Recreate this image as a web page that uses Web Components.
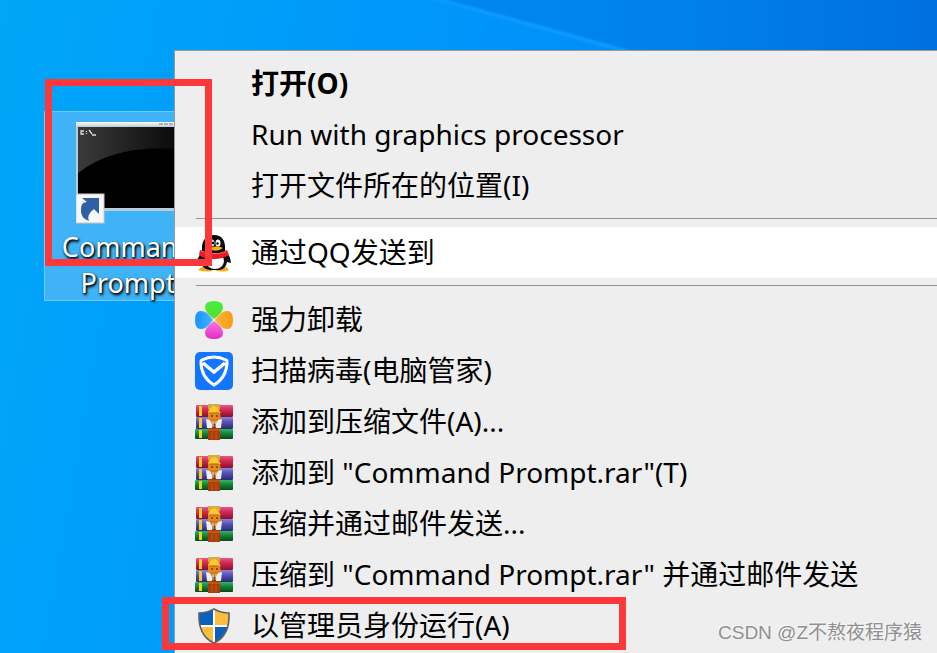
<!DOCTYPE html>
<html lang="zh-CN">
<head>
<meta charset="utf-8">
<title>Desktop context menu</title>
<style>
html,body{height:100%;margin:0;overflow:hidden}
body{font-family:"Noto Sans","Noto Sans CJK SC",sans-serif}
</style>
</head>
<body>
<win-desktop>
  <desktop-shortcut slot="icons">Command<br>Prompt</desktop-shortcut>
  <context-menu slot="menu">
    <menu-entry strong>打开(O)</menu-entry>
    <menu-entry>Run with graphics processor</menu-entry>
    <menu-entry>打开文件所在的位置(I)</menu-entry>
    <menu-line></menu-line>
    <menu-entry icon="qq" active>通过QQ发送到</menu-entry>
    <menu-line></menu-line>
    <menu-entry icon="clover">强力卸载</menu-entry>
    <menu-entry icon="guard">扫描病毒(电脑管家)</menu-entry>
    <menu-entry icon="rar">添加到压缩文件(A)...</menu-entry>
    <menu-entry icon="rar">添加到 "Command Prompt.rar"(T)</menu-entry>
    <menu-entry icon="rar">压缩并通过邮件发送...</menu-entry>
    <menu-entry icon="rar">压缩到 "Command Prompt.rar" 并通过邮件发送</menu-entry>
    <menu-entry icon="uac">以管理员身份运行(A)</menu-entry>
  </context-menu>
  <mark-box slot="marks" style="--x:45px;--y:79px;--w:167px;--h:187px"></mark-box>
  <mark-box slot="marks" style="--x:162px;--y:597px;--w:464px;--h:53px"></mark-box>
  <water-mark slot="marks">CSDN @Z不熬夜程序猿</water-mark>
</win-desktop>
<script>
const ICONS = {
  qq: `<svg viewBox="0 0 38 38">
    <path d="M3 36q5-5 13-4l3 4q-7 3-16 0zM19 36l4-4q8-1 11 4-7 3-15 0z" fill="#f9a91c"/>
    <path d="M8 17Q2 23 2 29l4-1q1 7 9 8h9q7-1 8-8l4 1q0-7-6-12z" fill="#0b0d10"/>
    <path d="M19 1C11 1 7 7 7 13v6h23v-6C30 7 27 1 19 1z" fill="#07090b"/>
    <ellipse cx="20" cy="27" rx="9" ry="8" fill="#fff"/>
    <path d="M5 16q14 7 27 0l2 5q-6 4-15 4h-4v5h-5v-6q-4-1-6-3z" fill="#e51c23"/>
    <path d="M6 17q12 5 25 1" stroke="#ff5a5a" fill="none"/>
    <ellipse cx="17" cy="9" rx="2.5" ry="3.5" fill="#ddd"/><ellipse cx="23" cy="9" rx="2.5" ry="3.5" fill="#fff"/>
    <circle cx="18" cy="9" r="1.3" fill="#000"/><circle cx="22.5" cy="9.5" r="1.2" fill="#000"/>
    <path d="M14 15q7-5 14-1-6 5-14 1z" fill="#f8ab13"/></svg>`,
  clover: `<svg viewBox="0 0 38 38"><defs>
    <linearGradient id="g" x2="0" y2="1"><stop stop-color="#45ef42"/><stop offset="1" stop-color="#5bdd28"/></linearGradient>
    <linearGradient id="b"><stop stop-color="#1593ff"/><stop offset="1" stop-color="#46b5ff"/></linearGradient>
    <linearGradient id="o"><stop stop-color="#ffb337"/><stop offset="1" stop-color="#f49a17"/></linearGradient>
    <linearGradient id="p" x2="0" y2="1"><stop stop-color="#f47ae0"/><stop offset="1" stop-color="#e62bc8"/></linearGradient></defs>
    <path d="M19 18C15 15 10 11 10 6q0-6 9-6t9 6c0 5-5 9-9 12z" fill="url(#g)"/>
    <path d="M18 19C15 15 11 10 6 10q-6 0-6 9t6 9c5 0 9-5 12-9z" fill="url(#b)"/>
    <path d="M20 19c3-4 7-9 12-9q6 0 6 9t-6 9c-5 0-9-5-12-9z" fill="url(#o)"/>
    <path d="M19 20c4 3 9 7 9 12q0 6-9 6t-9-6c0-5 5-9 9-12z" fill="url(#p)"/></svg>`,
  guard: `<svg viewBox="0 0 38 38"><rect width="38" height="38" rx="5" fill="#1476ff"/>
    <path d="M19 5q6 0 12 3 1 0 1 2 0 15-13 23Q6 25 6 10q0-2 1-2 6-3 12-3z" fill="none" stroke="#fff" stroke-width="3" stroke-linejoin="round"/>
    <path d="M8 11l11 9 11-9" fill="none" stroke="#fff" stroke-width="3.5"/></svg>`,
  rar: `<svg viewBox="0 0 38 38"><defs>
    <linearGradient id="r" x2="0" y2="1"><stop stop-color="#e8578a"/><stop offset=".35" stop-color="#d42f5b"/><stop offset="1" stop-color="#8c0d2b"/></linearGradient>
    <linearGradient id="v" x2="0" y2="1"><stop stop-color="#8885d8"/><stop offset=".4" stop-color="#5754b4"/><stop offset="1" stop-color="#2a2878"/></linearGradient>
    <linearGradient id="n" x2="0" y2="1"><stop stop-color="#35b464"/><stop offset=".4" stop-color="#16883c"/><stop offset="1" stop-color="#07481b"/></linearGradient></defs>
    <rect x="1" y="2" width="37" height="12" rx="1" fill="url(#r)"/>
    <rect x="1" y="14" width="37" height="12" rx="1" fill="url(#v)"/>
    <rect y="26" width="38" height="10" rx="1" fill="url(#n)"/>
    <path d="M4 3h3v10H4zM4 15h3v10H4zM4 27h3v8H4z" fill="#f2d21d"/>
    <rect x="13" y="1" width="12" height="5" fill="#cfae48"/>
    <path d="M13 10q0-7 6-7t6 7l1 7H13z" fill="#e08a1c"/>
    <path d="M14 8q1-5 5-5t5 5l2 2H13z" fill="#fcc832"/>
    <path d="M14 10h10" stroke="#b5630c"/>
    <path d="M16 13h2M21 13h2" stroke="#713500" stroke-width="1.5"/>
    <path d="M14 16h10v4l-5 3-5-3z" fill="#d07a1b"/>
    <path d="M11 16l4 1 2 4v4h-5zM27 16l-4 1-2 4v4h5z" fill="#eeeef2"/>
    <path d="M17 21h4v4h-4z" fill="#713d1b"/><path d="M18 18v6M21 18v6" stroke="#f2dfca"/>
    <rect x="13" y="25" width="12" height="12" fill="#a93e0b"/><path d="M13 27h12" stroke="#da701f"/><path d="M17 29v7M21 29v7" stroke="#c55816"/></svg>`,
  uac: `<svg viewBox="0 0 38 38"><defs><clipPath id="s"><path d="M19 2q7 4 15 4 1 23-15 30Q3 29 4 6q8 0 15-4z"/></clipPath></defs>
    <g clip-path="url(#s)"><path d="M0 0h19v19H0zM19 19h19v19H19z" fill="#0c60bd"/><path d="M19 0h19v19H19zM0 19h19v19H0z" fill="#ffbd3c"/>
    <path d="M19 0v38M0 19h38" stroke="#fff" stroke-width="2"/></g>
    <path d="M19 2q7 4 15 4 1 23-15 30Q3 29 4 6q8 0 15-4z" fill="none" stroke="#5c6268" stroke-width="1.6"/></svg>`
};

const define = (name, html, setup) => {
  const template = document.createElement('template');
  template.innerHTML = html;
  customElements.define(name, class extends HTMLElement {
    constructor() {
      super();
      this.attachShadow({mode: 'open'}).append(template.content.cloneNode(true));
    }
    connectedCallback() { if (setup) setup(this, this.shadowRoot); }
  });
};

define('win-desktop', `<style>
  :host{display:block;position:relative;height:100%;overflow:hidden;
    background:linear-gradient(100deg,#00a6f8 0%,#009ff9 20%,#0095fa 45%,#008ef8 60%,#0084ec 75%,#0070e0 100%)}
  .beam{position:absolute;left:0;top:0;width:937px;height:60px}
</style>
<svg class="beam" viewBox="0 0 937 60" aria-hidden="true">
  <defs><linearGradient id="k"><stop stop-color="#0087f0"/><stop offset=".5" stop-color="#0080ea"/><stop offset="1" stop-color="#006fe0"/></linearGradient>
  <filter id="f"><feGaussianBlur stdDeviation="1"/></filter></defs>
  <path d="M441 0L622 50V60H937V0z" fill="url(#k)"/>
  <path d="M425-4Q530 24 640 55" stroke="#0a9aff" stroke-width="4" fill="none" filter="url(#f)"/>
</svg>
<slot name="icons"></slot><slot name="menu"></slot><slot name="marks"></slot>`);

define('desktop-shortcut', `<style>
  :host{position:absolute;left:44px;top:111px}
  button{display:flex;flex-direction:column;align-items:center;width:168px;height:190px;padding:9px 0 0;
    box-sizing:border-box;background:#40b2f6;border:1px solid #72c8fa;color:#fff;font:inherit;font-size:27px;line-height:36px;
    text-shadow:1px 2px 3px #000,1px 1px 2px #023}
  svg{display:block;width:104px;height:108px;flex:none}
  span{display:block}
</style>
<button type="button">
<svg viewBox="0 0 104 108" aria-hidden="true"><defs>
  <linearGradient id="c"><stop stop-color="#3b3b3b"/><stop offset="1" stop-color="#080808"/></linearGradient>
  <linearGradient id="t" x2="0" y2="1"><stop stop-color="#fff"/><stop offset="1" stop-color="#bfc9d4"/></linearGradient></defs>
  <rect y="1" width="111" height="89" fill="#bacbd9"/><rect y="1" width="111" height="5" fill="url(#t)"/>
  <path d="M83 3h18" stroke="#a9b1ba" stroke-width="2" stroke-dasharray="4 1"/>
  <rect x="2" y="6" width="109" height="81" fill="#000"/>
  <path d="M2 6h102v22Q39 23 2 52z" fill="url(#c)"/>
  <g stroke="#ddd" stroke-width="1.3" fill="none"><path d="M8 10H5v3h3M10.500 10v1M10.500 12v1M13 9l3 4M16 14h4"/></g>
  <rect x="0" y="73" width="28" height="29" fill="#f7f7f7" stroke="#c5c9cc"/>
  <path d="M6 77h17v16l-5-5q-8 6-5 12-9-3-8-12 0-7 6-7z" fill="#2f60a5"/>
</svg><span><slot></slot></span></button>`);

define('context-menu', `<style>
  :host{display:block;position:absolute;left:174px;top:50px;right:0;padding:7px 0 12px;
    background:#eee;border:solid #999;border-width:1px 0 0 1px}
</style><slot></slot>`, host => host.setAttribute('role', 'menu'));

define('menu-entry', `<style>
  :host{display:block}
  button{display:flex;align-items:center;gap:18px;width:100%;height:51px;padding:0 0 0 20px;border:0;background:none;
    color:#000;font:inherit;font-size:28px;line-height:40px;text-align:left;white-space:nowrap}
  :host([active]) button{background:#fff}
  :host([strong]) button{font-weight:700}
  i{display:block;flex:none;width:38px;height:38px}
  svg{display:block;width:38px;height:38px}
  span{padding-bottom:1px}
</style><button type="button" role="menuitem"><i aria-hidden="true"></i><span><slot></slot></span></button>`,
  (host, root) => { root.querySelector('i').innerHTML = ICONS[host.getAttribute('icon')] || ''; });

define('menu-line', `<style>
  :host{display:block;height:16px;padding:7px 0 0 21px;box-sizing:border-box}
  hr{margin:0;border:0;border-top:1px solid #919191}
</style><hr>`);

define('mark-box', `<style>
  :host{display:block;position:absolute;left:var(--x);top:var(--y);width:var(--w);height:var(--h);
    box-sizing:border-box;border:7px solid #fc383a;pointer-events:none}
</style>`);

define('water-mark', `<style>
  :host{position:absolute;right:15px;bottom:6px;color:#909090;font:19px/28px "Liberation Sans","Noto Sans CJK SC",sans-serif;
    text-shadow:-1px -1px 0 #fafafa}
</style><slot></slot>`);
</script>
</body>
</html>
